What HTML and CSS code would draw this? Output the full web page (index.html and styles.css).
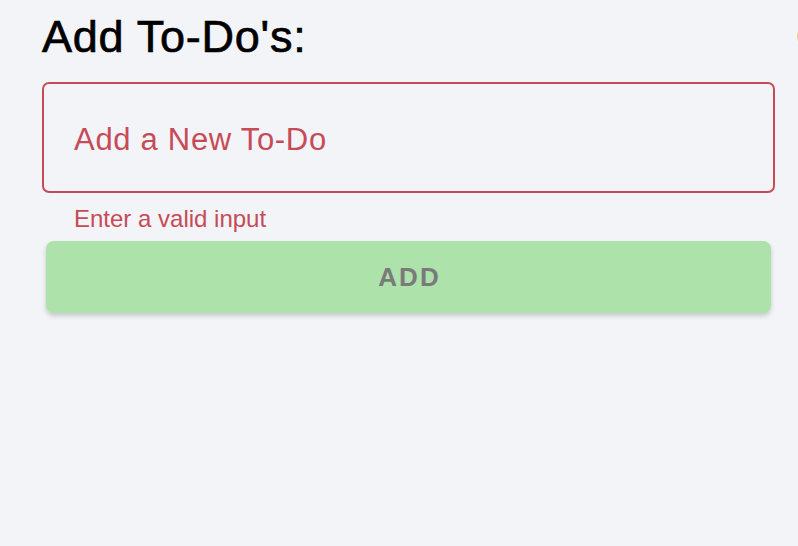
FILE: index.html
```html
<!DOCTYPE html>
<html lang="en">
<head>
<meta charset="utf-8">
<title>To-Do</title>
<link rel="stylesheet" href="styles.css">
</head>
<body>
<div class="columns">
  <section class="column">
    <h2 class="title">Add To-Do's:</h2>
    <div class="field">
      <input class="field-input" type="text" placeholder="Add a New To-Do">
    </div>
    <div class="helper">Enter a valid input</div>
    <button class="add-btn" type="button">ADD</button>
  </section>
  <section class="column">
    <h2 class="title">Completed To-Do's:</h2>
  </section>
</div>
</body>
</html>
```
FILE: styles.css
```css
html, body {
  margin: 0;
  padding: 0;
  background: #f3f4f8;
  overflow: hidden;
  height: 100%;
}
body {
  font-family: "Liberation Sans", Arial, sans-serif;
}
.columns {
  display: flex;
  gap: 21px;
  padding-left: 42px;
}
.column {
  flex: 0 0 733px;
  display: flex;
  flex-direction: column;
}
.title {
  margin: 12px 0 0 0;
  font-size: 45px;
  line-height: 50px;
  font-weight: normal;
  letter-spacing: 0.75px;
  color: #000;
  -webkit-text-stroke: 0.7px #000;
  white-space: nowrap;
}
.field {
  margin-top: 20px;
  height: 102px;
  border: 2px solid #c64b57;
  border-radius: 7px;
  display: flex;
  align-items: center;
  padding-left: 30px;
  padding-top: 5px;
}
.field-input {
  flex: 1;
  border: 0;
  outline: none;
  background: transparent;
  font-family: "Liberation Sans", Arial, sans-serif;
  font-size: 31px;
  letter-spacing: 0.7px;
  color: #c64b57;
  padding: 0;
  margin: 0;
}
.field-input::placeholder {
  color: #c64b57;
  opacity: 1;
}
.helper {
  margin-top: 12px;
  padding-left: 32px;
  font-size: 24px;
  line-height: 28px;
  color: #c64b57;
}
.add-btn {
  margin: 8px 4px 0 4px;
  height: 72px;
  border: 0;
  border-radius: 8px;
  background: #ade2ab;
  box-shadow: 0 3px 5px rgba(0, 0, 0, 0.18);
  font-family: "Liberation Sans", Arial, sans-serif;
  font-size: 26px;
  font-weight: bold;
  letter-spacing: 2px;
  color: #7a7a7a;
  padding: 0 0 0 2px;
}
```
